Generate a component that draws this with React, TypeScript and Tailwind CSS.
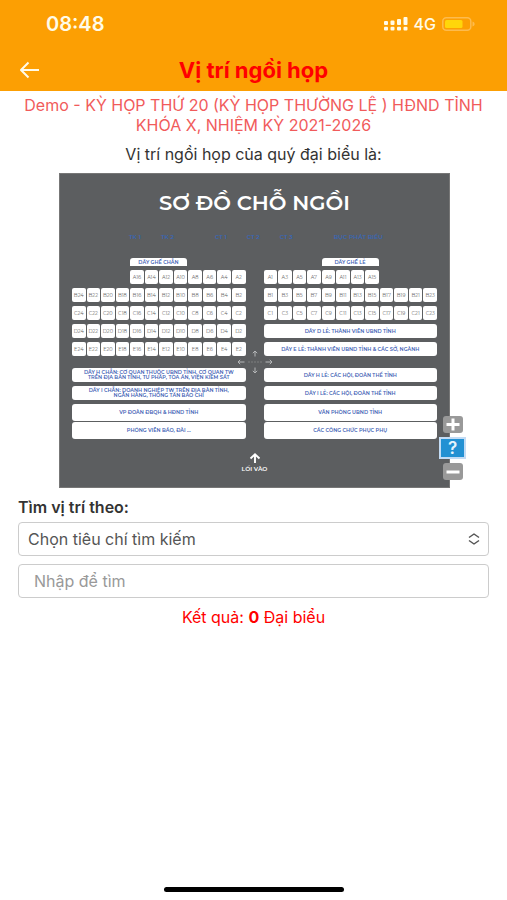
import { useState } from 'react';
import type { ReactNode } from 'react';

const evens = (row: string, from: number) =>
  Array.from({ length: from / 2 }, (_, i) => `${row}${from - i * 2}`);

const odds = (row: string, to: number) =>
  Array.from({ length: (to + 1) / 2 }, (_, i) => `${row}${i * 2 + 1}`);

function StatusBar() {
  return (
    <div className="flex h-12 items-center justify-between pr-8 pl-[46px] text-[#fffbe8]">
      <span className="text-xl font-semibold">08:48</span>
      <div className="flex items-center gap-1.5">
        <svg width="24" height="14" viewBox="0 0 24 14" fill="currentColor">
          <rect x="0" y="4" width="4" height="4" rx="1" />
          <rect x="6.5" y="3.5" width="4" height="4.5" rx="1" />
          <rect x="13" y="2" width="4" height="6" rx="1" />
          <rect x="19.5" y="0" width="4" height="8" rx="1" />
          <rect x="0" y="9.8" width="4" height="3.7" rx="1" />
          <rect x="6.5" y="9.8" width="4" height="3.7" rx="1" />
          <rect x="13" y="9.8" width="4" height="3.7" rx="1" />
          <rect x="19.5" y="9.8" width="4" height="3.7" rx="1" />
        </svg>
        <span className="text-base font-medium">4G</span>
        <svg width="33" height="14" viewBox="0 0 33 14">
          <rect
            x="0.8"
            y="0.8"
            width="28"
            height="12.4"
            rx="3.5"
            fill="none"
            stroke="#fdbb4e"
            strokeWidth="1.5"
          />
          <rect x="3" y="3" width="17.5" height="8" rx="1.5" fill="#ffd60a" />
          <path d="M30.5 4.5c1.6.6 2.1 1.4 2.1 2.5s-.5 1.9-2.1 2.5z" fill="#fdbb4e" />
        </svg>
      </div>
    </div>
  );
}

function Header() {
  return (
    <header className="bg-[#fc9f03]">
      <StatusBar />
      <div className="grid h-[43px] grid-cols-[40px_1fr_40px] items-center">
        <button type="button" aria-label="Quay lại" className="pl-[19px] text-[#fffbe8]">
          <svg width="20" height="18" viewBox="0 0 20 18" fill="none" stroke="currentColor" strokeWidth="2">
            <path d="M9.5 1.5 2 9l7.5 7.5M2 9h18" strokeLinejoin="round" />
          </svg>
        </button>
        <h1 className="text-center text-[22px] leading-7 font-bold text-[#f00]">
          Vị trí ngồi họp
        </h1>
      </div>
    </header>
  );
}

function SeatRow({ seats, indent }: { seats: string[]; indent?: boolean }) {
  return (
    <div className="grid h-[14px] grid-cols-12 gap-px">
      {seats.map((seat, i) => (
        <button
          key={seat}
          type="button"
          className={`rounded-[2px] bg-white text-center text-[5px] leading-[12px] text-[#666] ${
            indent && i === 0 ? 'col-start-5' : ''
          }`}
        >
          {seat}
        </button>
      ))}
    </div>
  );
}

function Block({ children, tall }: { children: ReactNode; tall?: boolean }) {
  return (
    <div
      className={`flex items-center justify-center rounded-[3px] bg-white text-center text-[5px] leading-[5px] font-semibold text-[#3f62b5] ${
        tall ? 'h-[17px]' : 'h-[14px]'
      }`}
    >
      <span>{children}</span>
    </div>
  );
}

function AisleLabel({ children }: { children: ReactNode }) {
  return (
    <div className="pl-[58px]">
      <div className="h-2 w-[57px] rounded-t-[3px] bg-white text-center text-[5px] leading-[8px] font-semibold text-[#3f62b5]">
        {children}
      </div>
    </div>
  );
}

function Crossing() {
  return (
    <div className="relative h-3">
      <svg
        className="absolute top-1/2 left-1/2 -translate-x-1/2 -translate-y-1/2"
        width="36"
        height="24"
        viewBox="0 0 36 24"
        fill="none"
        stroke="#b5b7b8"
      >
        <path d="M18 6.5V1M15.8 3.2 18 1l2.2 2.2" />
        <path d="M18 17.5V23M15.8 20.8 18 23l2.2-2.2" />
        <path d="M7.5 12H1M3.2 9.8 1 12l2.2 2.2" />
        <path d="M28.5 12H35M32.8 9.8 35 12l-2.2 2.2" />
        <path d="M11 12h14" strokeDasharray="2 1" stroke="#8b8d8e" strokeWidth="0.7" />
      </svg>
    </div>
  );
}

function ZoomControls() {
  return (
    <div className="absolute -right-[17px] bottom-[7px] flex flex-col items-center gap-1">
      <button
        type="button"
        aria-label="Phóng to"
        className="flex h-[17px] w-5 items-center justify-center rounded-[3px] bg-[#999]"
      >
        <svg width="14" height="13" viewBox="0 0 14 13" stroke="#fff" strokeWidth="3">
          <path d="M7 0.5v12M0.5 6.5h13" />
        </svg>
      </button>
      <button
        type="button"
        aria-label="Trợ giúp"
        className="flex h-[22px] w-[27px] items-center justify-center border-2 border-[#c3dcf5] bg-[#2391d3] font-[Inter,sans-serif] text-[17px] leading-[18px] font-semibold text-[#e6f4fd]"
      >
        ?
      </button>
      <button
        type="button"
        aria-label="Thu nhỏ"
        className="flex h-[17px] w-5 items-center justify-center rounded-[3px] bg-[#999]"
      >
        <svg width="14" height="4" viewBox="0 0 14 4" stroke="#fff" strokeWidth="3">
          <path d="M0.5 2h13" />
        </svg>
      </button>
    </div>
  );
}

function SeatMap() {
  return (
    <section className="relative mt-[9px] mr-[57px] ml-[59px] border border-[#777] bg-[#5c5e60] px-3 pb-[14px] font-[Montserrat,Inter,sans-serif]">
      <h2 className="mt-[15px] text-center text-[21px] leading-7 font-semibold text-white">
        SƠ ĐỒ CHỖ NGỒI
      </h2>
      <div className="mt-4 flex h-2 justify-between pr-[54px] pl-[57px] text-[6px] leading-[8px] font-semibold text-[#3a66b4]">
        <div className="flex gap-5">
          <span>TK 1</span>
          <span>TK 2</span>
        </div>
        <div className="flex gap-5">
          <span>CT 1</span>
          <span>CT 2</span>
          <span>CT 3</span>
        </div>
        <span>BỤC PHÁT BIỂU</span>
      </div>

      <div className="mt-[17px] grid grid-cols-2 gap-x-[18px]">
        <div className="flex flex-col gap-1">
          <AisleLabel>DÃY GHẾ CHẴN</AisleLabel>
          <SeatRow seats={evens('A', 16)} indent />
          <SeatRow seats={evens('B', 24)} />
          <SeatRow seats={evens('C', 24)} />
          <SeatRow seats={evens('D', 24)} />
          <SeatRow seats={evens('E', 24)} />
        </div>
        <div className="flex flex-col gap-1">
          <AisleLabel>DÃY GHẾ LẺ</AisleLabel>
          <SeatRow seats={odds('A', 15)} />
          <SeatRow seats={odds('B', 23)} />
          <SeatRow seats={odds('C', 23)} />
          <Block>DÃY D LẺ: THÀNH VIÊN UBND TỈNH</Block>
          <Block>DÃY E LẺ: THÀNH VIÊN UBND TỈNH &amp; CÁC SỞ, NGÀNH</Block>
        </div>
      </div>

      <Crossing />

      <div className="grid grid-cols-2 gap-x-[18px]">
        <div className="flex flex-col gap-1">
          <Block>
            DÃY H CHẴN: CƠ QUAN THUỘC UBND TỈNH, CƠ QUAN TW
            <br />
            TRÊN ĐỊA BÀN TỈNH, TƯ PHÁP, TÒA ÁN, VIỆN KIỂM SÁT
          </Block>
          <Block>
            DÃY I CHẴN: DOANH NGHIỆP TW TRÊN ĐỊA BÀN TỈNH,
            <br />
            NGÂN HÀNG, THÔNG TẤN BÁO CHÍ
          </Block>
          <div className="flex flex-col gap-px">
            <Block tall>VP ĐOÀN ĐBQH &amp; HĐND TỈNH</Block>
            <Block tall>PHÓNG VIÊN BÁO, ĐÀI ...</Block>
          </div>
        </div>
        <div className="flex flex-col gap-1">
          <Block>DÃY H LẺ: CÁC HỘI, ĐOÀN THỂ TỈNH</Block>
          <Block>DÃY I LẺ: CÁC HỘI, ĐOÀN THỂ TỈNH</Block>
          <div className="flex flex-col gap-px">
            <Block tall>VĂN PHÒNG UBND TỈNH</Block>
            <Block tall>CÁC CÔNG CHỨC PHỤC PHỤ</Block>
          </div>
        </div>
      </div>

      <div className="mt-[14px] flex flex-col items-center gap-0.5 text-[6px] leading-[8px] font-semibold text-white">
        <svg width="12" height="10" viewBox="0 0 12 10" fill="none" stroke="currentColor" strokeWidth="1.9">
          <path d="M6 10V1.5M1.5 5.5 6 1.3l4.5 4.2" />
        </svg>
        <span>LỐI VÀO</span>
      </div>

      <ZoomControls />
    </section>
  );
}

export default function App() {
  const [criteria, setCriteria] = useState('');
  const [keyword, setKeyword] = useState('');

  return (
    <div className="flex min-h-screen flex-col bg-white font-[Inter,sans-serif] text-base leading-5 text-[#333]">
      <Header />
      <main>
        <p className="mt-1 px-4 text-center text-[#f15b5b]">
          Demo - KỲ HỌP THỨ 20 (KỲ HỌP THƯỜNG LỆ ) HĐND TỈNH KHÓA X, NHIỆM KỲ 2021-2026
        </p>
        <p className="mt-[9px] text-center">Vị trí ngồi họp của quý đại biểu là:</p>

        <SeatMap />

        <form className="mt-[9px] flex flex-col px-[18px]" onSubmit={(e) => e.preventDefault()}>
          <label htmlFor="criteria" className="font-semibold">
            Tìm vị trí theo:
          </label>
          <div className="relative mt-[5px]">
            <select
              id="criteria"
              value={criteria}
              onChange={(e) => setCriteria(e.target.value)}
              className="h-[34px] w-full appearance-none rounded-[4px] border border-[#ccc] bg-white pr-8 pl-[9px] text-[#555]"
            >
              <option value="">Chọn tiêu chí tìm kiếm</option>
              <option value="name">Họ và tên</option>
              <option value="seat">Số ghế</option>
            </select>
            <svg
              className="pointer-events-none absolute top-1/2 right-[9px] -translate-y-1/2"
              width="12"
              height="12"
              viewBox="0 0 12 12"
              fill="none"
              stroke="#555"
              strokeWidth="1.5"
            >
              <path d="M1 4.5 6 1l5 3.5M1 7.5 6 11l5-3.5" strokeLinejoin="round" />
            </svg>
          </div>
          <input
            type="text"
            aria-label="Nhập để tìm"
            placeholder="Nhập để tìm"
            value={keyword}
            onChange={(e) => setKeyword(e.target.value)}
            className="mt-2 h-[34px] w-full rounded-[4px] border border-[#ccc] px-[15px] placeholder:text-[#999]"
          />
        </form>

        <p className="mt-[9px] text-center text-[#f00]">
          Kết quả: <b>0</b> Đại biểu
        </p>
      </main>
      <div className="mx-auto mt-auto mb-2 h-[5px] w-[180px] rounded-full bg-black" />
    </div>
  );
}
